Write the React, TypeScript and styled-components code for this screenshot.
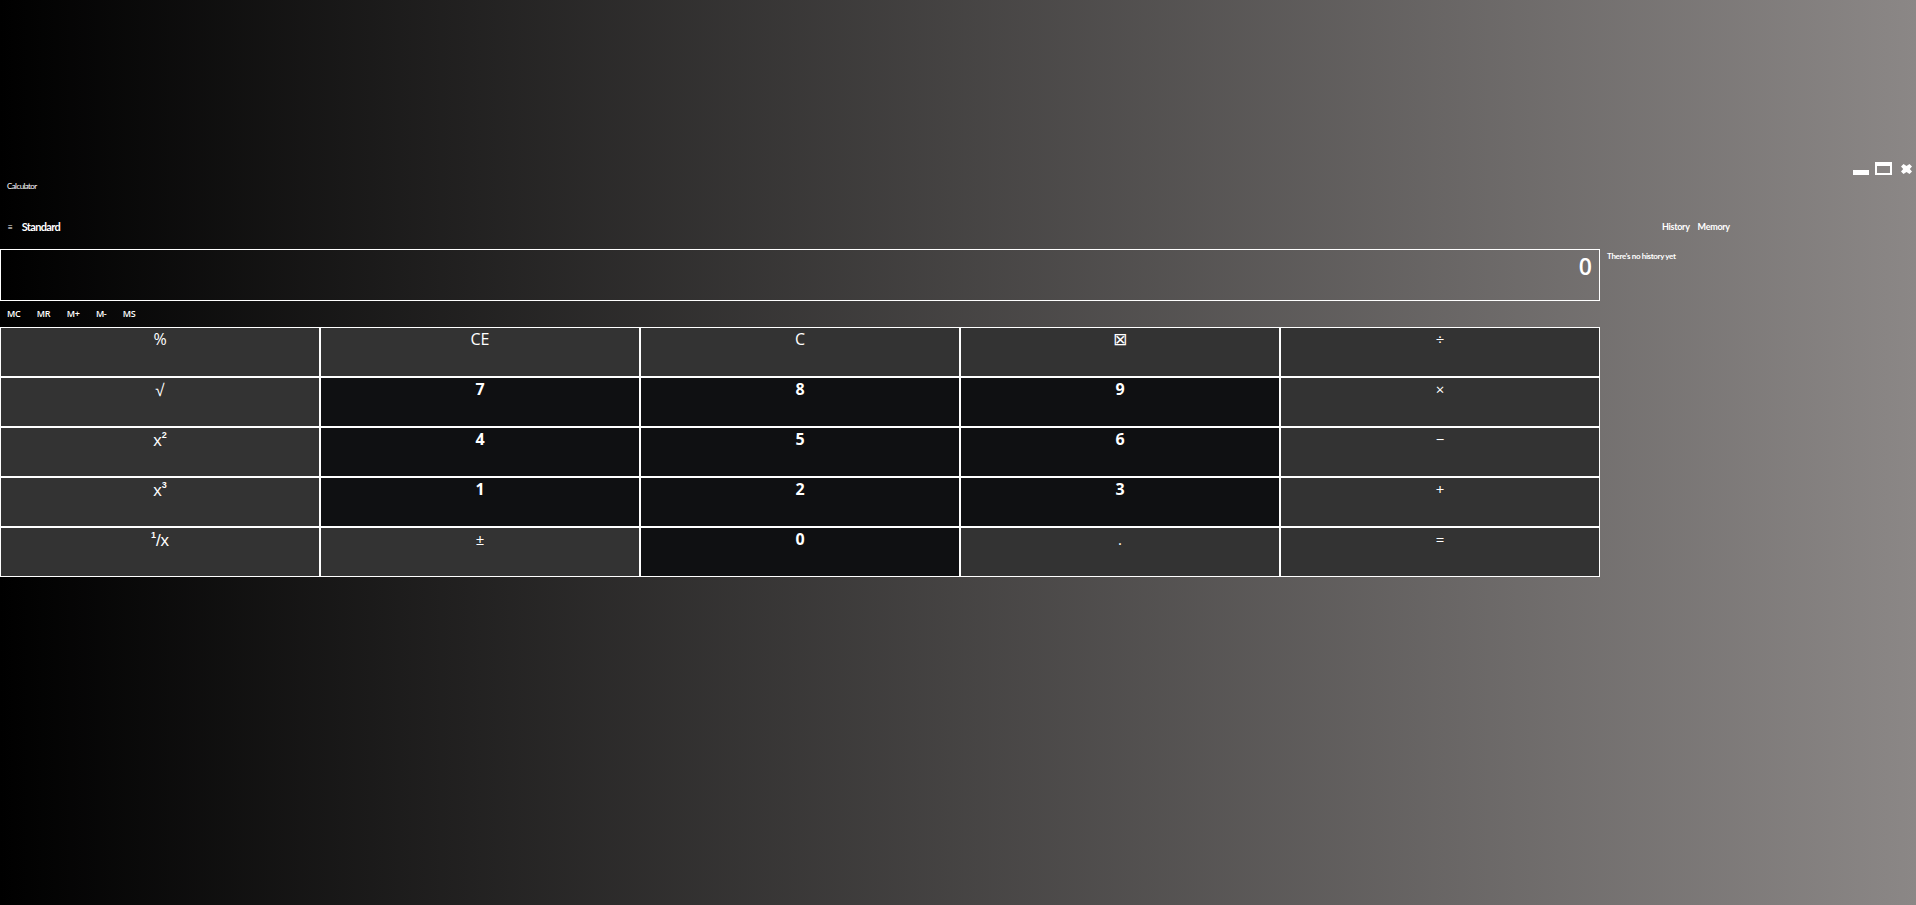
import React from 'react'
import styled, { createGlobalStyle } from 'styled-components'

const GlobalStyle = createGlobalStyle`
  html, body {
    margin: 0;
    height: 100%;
  }

  body {
    background: linear-gradient(to right, #000 0%, #8b8786 100%);
    color: #fff;
    font-family: 'Open Sans', 'Liberation Sans', sans-serif;
    overflow: hidden;
  }
`

const Page = styled.div`
  width: 1916px;
  height: 905px;
  padding-top: 162px;
  box-sizing: border-box;
`

const TitleBar = styled.header`
  height: 40px;
  display: flex;
  justify-content: space-between;
  align-items: flex-start;
  padding: 0 4px 0 7px;
`

const AppName = styled.span`
  margin-top: 18px;
  font-family: Lato, sans-serif;
  font-size: 8px;
  line-height: 12px;
  letter-spacing: -0.6px;
`

const WindowControls = styled.div`
  display: flex;
  align-items: flex-start;
  gap: 6px;
`

const ControlIcon = styled.svg`
  display: block;
  fill: #fff;
`

const Main = styled.main`
  display: grid;
  grid-template-columns: 1600px 1fr;
`

const Calculator = styled.section`
  width: 1600px;
`

const ModeBar = styled.div`
  height: 47px;
  display: flex;
  align-items: center;
  gap: 9px;
  padding: 2px 0 0 8px;
  box-sizing: border-box;
`

const MenuIcon = styled.span`
  font-size: 8px;
  font-weight: 700;
`

const ModeName = styled.span`
  font-family: Lato, sans-serif;
  font-size: 11px;
  font-weight: 700;
  letter-spacing: -0.65px;
`

const Display = styled.output`
  display: block;
  height: 52px;
  box-sizing: border-box;
  border: 1px solid #fff;
  padding: 0 7px;
  text-align: right;
  font-size: 23px;
  font-weight: 600;
  line-height: 33px;
`

const MemoryBar = styled.div`
  height: 26px;
  display: flex;
  align-items: center;
  gap: 16.4px;
  padding: 0 0 2px 7px;
  box-sizing: border-box;
`

const MemoryKey = styled.span`
  font-size: 9px;
  font-weight: 600;
  letter-spacing: -0.3px;
`

const Keypad = styled.div`
  display: grid;
  grid-template-columns: repeat(5, 320px);
  grid-auto-rows: 50px;
`

type KeyKind = 'digit' | 'op' | 'math' | 'glyph' | 'text'

const keyFonts: Record<KeyKind, string> = {
  digit: "700 16px/23.5px 'Open Sans', sans-serif",
  op: "400 15px/23px 'Open Sans', sans-serif",
  math: "400 17px/25px 'Liberation Sans', sans-serif",
  glyph: "400 17px/23px 'DejaVu Sans', sans-serif",
  text: "400 16px/23px 'Open Sans', sans-serif",
}

const Key = styled.button<{ $kind: KeyKind }>`
  margin: 0;
  padding: 0;
  border: 1px solid #fff;
  border-radius: 0;
  background: ${p => (p.$kind === 'digit' ? '#0f1012' : '#333')};
  color: #fff;
  font: ${p => keyFonts[p.$kind]};
  display: flex;
  justify-content: center;
  align-items: flex-start;
`

const Exponent = styled.span`
  font-size: 9px;
  font-weight: 700;
  line-height: 10px;
  position: relative;
  top: 2px;
`

const Side = styled.aside`
  display: flex;
  flex-direction: column;
`

const SideTabs = styled.div`
  height: 47px;
  display: flex;
  align-items: center;
  gap: 8px;
  padding: 2px 0 0 62px;
  box-sizing: border-box;
`

const SideTab = styled.span`
  font-family: Lato, sans-serif;
  font-size: 9px;
  font-weight: 700;
  letter-spacing: -0.3px;
`

const EmptyNote = styled.p`
  margin: 0 0 0 7px;
  font-family: Lato, sans-serif;
  font-size: 8px;
  font-weight: 700;
  line-height: 14px;
  letter-spacing: -0.35px;
`

type KeyDef = { id: string; label: React.ReactNode; kind: KeyKind }

const keys: KeyDef[] = [
  { id: 'percent', label: '%', kind: 'text' },
  { id: 'ce', label: 'CE', kind: 'text' },
  { id: 'c', label: 'C', kind: 'text' },
  { id: 'back', label: '⊠', kind: 'glyph' },
  { id: 'div', label: '÷', kind: 'op' },
  { id: 'sqrt', label: '√', kind: 'math' },
  { id: '7', label: '7', kind: 'digit' },
  { id: '8', label: '8', kind: 'digit' },
  { id: '9', label: '9', kind: 'digit' },
  { id: 'mul', label: '×', kind: 'op' },
  { id: 'sq', label: <>x<Exponent>2</Exponent></>, kind: 'math' },
  { id: '4', label: '4', kind: 'digit' },
  { id: '5', label: '5', kind: 'digit' },
  { id: '6', label: '6', kind: 'digit' },
  { id: 'sub', label: '−', kind: 'op' },
  { id: 'cube', label: <>x<Exponent>3</Exponent></>, kind: 'math' },
  { id: '1', label: '1', kind: 'digit' },
  { id: '2', label: '2', kind: 'digit' },
  { id: '3', label: '3', kind: 'digit' },
  { id: 'add', label: '+', kind: 'op' },
  { id: 'inv', label: <><Exponent>1</Exponent>/x</>, kind: 'math' },
  { id: 'neg', label: '±', kind: 'op' },
  { id: '0', label: '0', kind: 'digit' },
  { id: 'dot', label: '.', kind: 'op' },
  { id: 'eq', label: '=', kind: 'op' },
]

const memoryKeys = ['MC', 'MR', 'M+', 'M-', 'MS']

const App: React.FC = () => (
  <Page>
    <GlobalStyle />
    <TitleBar>
      <AppName>Calculator</AppName>
      <WindowControls>
        <ControlIcon width='16' height='13' viewBox='0 0 16 13'>
          <rect x='0' y='8' width='16' height='5' />
        </ControlIcon>
        <ControlIcon width='17' height='13' viewBox='0 0 17 13'>
          <path fillRule='evenodd' d='M0 0h17v13H0z M2 4v7h13V4z' />
        </ControlIcon>
        <ControlIcon width='14' height='13' viewBox='0 0 14 13'>
          <path d='M3 4.500L5.500 2 8.500 4 11.500 2 14 4.500 11.800 7 14 9.500 11.500 12 8.500 10 5.500 12 3 9.500 5.200 7z' />
        </ControlIcon>
      </WindowControls>
    </TitleBar>
    <Main>
      <Calculator>
        <ModeBar>
          <MenuIcon>≡</MenuIcon>
          <ModeName>Standard</ModeName>
        </ModeBar>
        <Display>0</Display>
        <MemoryBar>
          {memoryKeys.map(k => (
            <MemoryKey key={k}>{k}</MemoryKey>
          ))}
        </MemoryBar>
        <Keypad>
          {keys.map(k => (
            <Key key={k.id} $kind={k.kind}>
              {k.label}
            </Key>
          ))}
        </Keypad>
      </Calculator>
      <Side>
        <SideTabs>
          <SideTab>History</SideTab>
          <SideTab>Memory</SideTab>
        </SideTabs>
        <EmptyNote>There's no history yet</EmptyNote>
      </Side>
    </Main>
  </Page>
)

export default App
